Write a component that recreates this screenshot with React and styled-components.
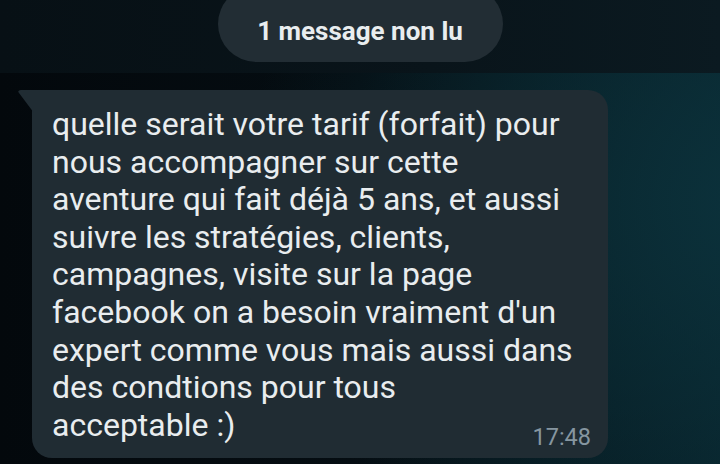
import React from 'react';
import styled, { createGlobalStyle } from 'styled-components';

const GlobalStyle = createGlobalStyle`
    html, body {
        margin: 0;
        padding: 0;
        width: 720px;
        height: 464px;
        overflow: hidden;
        background: #050c11;
        font-family: Roboto, 'Noto Sans', sans-serif;
    }
`;

const Screen = styled.div`
    width: 720px;
    height: 464px;
    display: flex;
    flex-direction: column;
    overflow: hidden;
    background:
        radial-gradient(ellipse 520px 420px at 760px 200px, rgba(12, 52, 62, 0.85), rgba(12, 52, 62, 0) 100%),
        linear-gradient(90deg, #03080c 0%, #050d12 50%, #08222a 100%);
`;

const TopBand = styled.div`
    height: 73px;
    flex-shrink: 0;
    display: flex;
    justify-content: center;
    background: linear-gradient(90deg, #071015 0%, #09141a 60%, #0b1a21 100%);
`;

const UnreadPill = styled.div`
    margin-top: -14px;
    width: 285px;
    height: 76px;
    box-sizing: border-box;
    padding-top: 14px;
    border-radius: 38px;
    background: #222d34;
    color: #e9edef;
    font-weight: 700;
    font-size: 26px;
    display: flex;
    align-items: center;
    justify-content: center;
`;

const Bubble = styled.div`
    position: relative;
    margin: 17px 0 0 32px;
    width: 576px;
    box-sizing: border-box;
    padding: 16px 17px 8px 20px;
    background: #202c33;
    border-radius: 0 20px 20px 20px;
    display: flex;
    flex-direction: column;

    &::before {
        content: '';
        position: absolute;
        left: -14px;
        top: 0;
        width: 16px;
        height: 23px;
        background: #202c33;
        clip-path: polygon(0 0, 100% 0, 100% 100%, 5% 12%, 0 5%);
        border-top-left-radius: 3px;
    }
`;

const Text = styled.p`
    margin: 0;
    color: #e9edef;
    font-size: 32px;
    line-height: 37.6px;
    letter-spacing: 0;
    white-space: nowrap;
`;

const Time = styled.span`
    align-self: flex-end;
    margin-top: -20px;
    color: #8696a0;
    font-size: 23.5px;
    line-height: 26px;
`;

const lines = [
    'quelle serait votre tarif (forfait) pour',
    'nous accompagner sur cette',
    'aventure qui fait déjà 5 ans, et aussi',
    'suivre les stratégies, clients,',
    'campagnes, visite sur la page',
    "facebook on a besoin vraiment d'un",
    'expert comme vous mais aussi dans',
    'des condtions pour tous',
    'acceptable :)',
];

export default function App() {
    return (
        <>
            <GlobalStyle />
            <Screen>
                <TopBand>
                    <UnreadPill>1 message non lu</UnreadPill>
                </TopBand>
                <Bubble>
                    <Text>
                        {lines.map((l, i) => (
                            <React.Fragment key={i}>
                                {l}
                                {i < lines.length - 1 && <br />}
                            </React.Fragment>
                        ))}
                    </Text>
                    <Time>17:48</Time>
                </Bubble>
            </Screen>
        </>
    );
}
